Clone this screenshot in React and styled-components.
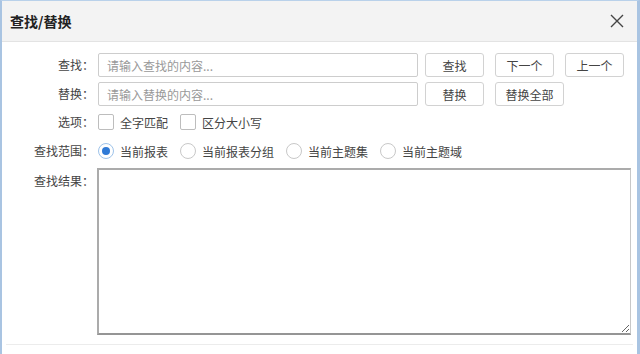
import styled, { createGlobalStyle } from 'styled-components';

const GlobalStyle = createGlobalStyle`
  html, body {
    margin: 0;
    padding: 0;
    background: #fff;
  }
  body {
    font-family: "Noto Sans CJK SC", "Noto Sans", sans-serif;
    font-size: 12px;
    color: #333;
  }
`;

function App() {
  const scopes = ['当前报表', '当前报表分组', '当前主题集', '当前主题域'];

  return (
    <>
      <GlobalStyle />
      <Dialog>
        <Header>
          <Title>查找/替换</Title>
          <CloseButton aria-label="close">
            <svg width="14" height="14" viewBox="0 0 14 14">
              <path d="M1 1 L13 13 M13 1 L1 13" stroke="#444" strokeWidth="1.4" fill="none" />
            </svg>
          </CloseButton>
        </Header>

        <Body>
          <Row>
            <Label>查找：</Label>
            <TextInput placeholder="请输入查找的内容..." />
            <ButtonGroup>
              <Button>查找</Button>
              <Button>下一个</Button>
              <Button>上一个</Button>
            </ButtonGroup>
          </Row>

          <Row $top={5}>
            <Label>替换：</Label>
            <TextInput placeholder="请输入替换的内容..." />
            <ButtonGroup>
              <Button>替换</Button>
              <Button $wide>替换全部</Button>
            </ButtonGroup>
          </Row>

          <Row $top={4}>
            <Label>选项：</Label>
            <Choice>
              <Box />
              <span>全字匹配</span>
            </Choice>
            <Choice>
              <Box />
              <span>区分大小写</span>
            </Choice>
          </Row>

          <Row $top={5}>
            <Label>查找范围：</Label>
            {scopes.map((s, i) => (
              <Choice key={s}>
                <Radio $checked={i === 0} />
                <span>{s}</span>
              </Choice>
            ))}
          </Row>

          <ResultRow>
            <Label $top>查找结果：</Label>
            <Results />
          </ResultRow>
        </Body>

        <Footer />
      </Dialog>
    </>
  );
}

export default App;

const Dialog = styled.div`
  width: 640px;
  height: 354px;
  box-sizing: border-box;
  border-top: 1px solid #b9d1ea;
  border-left: 2px solid #a9c4e2;
  border-right: 3px solid #a9c4e2;
  background: #fff;
  display: flex;
  flex-direction: column;
  overflow: hidden;
`;

const Header = styled.div`
  height: 40px;
  flex-shrink: 0;
  background: #f3f3f3;
  border-bottom: 1px solid #e3e3e3;
  display: flex;
  align-items: center;
  justify-content: space-between;
  padding: 0 12px 0 8px;
`;

const Title = styled.div`
  font-size: 14px;
  font-weight: bold;
  color: #222;
`;

const CloseButton = styled.div`
  width: 16px;
  height: 16px;
  display: flex;
  align-items: center;
  justify-content: center;
`;

const Body = styled.div`
  flex: 1;
  padding-top: 11px;
  padding-right: 6px;
`;

const Row = styled.div`
  display: flex;
  align-items: center;
  height: 24px;
  margin-top: ${(p) => p.$top || 0}px;
`;

const ResultRow = styled.div`
  display: flex;
  align-items: flex-start;
  margin-top: 5px;
`;

const Label = styled.div`
  width: 92px;
  flex-shrink: 0;
  text-align: right;
  padding-right: 4px;
  color: #444;
  line-height: 24px;
  white-space: nowrap;
  margin-top: ${(p) => (p.$top ? '1px' : '0')};
`;

const TextInput = styled.input`
  width: 320px;
  height: 24px;
  box-sizing: border-box;
  border: 1px solid #cdcdcd;
  border-radius: 2px;
  padding: 0 8px;
  font-family: inherit;
  font-size: 12px;
  color: #333;
  outline: none;

  &::placeholder {
    color: #999;
  }
`;

const ButtonGroup = styled.div`
  display: flex;
  gap: 11px;
  margin-left: 7px;
`;

const Button = styled.button`
  width: ${(p) => (p.$wide ? '69px' : '59px')};
  height: 24px;
  box-sizing: border-box;
  border: 1px solid #d2d2d2;
  border-radius: 3px;
  background: #fff;
  font-family: inherit;
  font-size: 12px;
  color: #444;
  padding: 0;
`;

const Choice = styled.label`
  display: flex;
  align-items: center;
  gap: 6px;
  margin-right: 12px;
  color: #444;
`;

const Box = styled.span`
  width: 16px;
  height: 16px;
  box-sizing: border-box;
  border: 1px solid #bdbdbd;
  border-radius: 2px;
  background: #fff;
`;

const Radio = styled.span`
  width: 16px;
  height: 16px;
  box-sizing: border-box;
  border-radius: 50%;
  border: 1px solid ${(p) => (p.$checked ? '#9ec3ea' : '#c8c8c8')};
  background: #fff;
  display: flex;
  align-items: center;
  justify-content: center;

  &::after {
    content: '';
    width: 8px;
    height: 8px;
    border-radius: 50%;
    background: ${(p) => (p.$checked ? '#2f7ad6' : 'transparent')};
  }
`;

const Results = styled.textarea`
  width: 534px;
  height: 167px;
  box-sizing: border-box;
  border-top: 2px solid #ababab;
  border-left: 2px solid #ababab;
  border-right: 1px solid #c8c8c8;
  border-bottom: 2px solid #959595;
  margin-left: -1px;
  background: #fff;
  outline: none;
  font-family: inherit;
  font-size: 12px;
`;

const Footer = styled.div`
  height: 9px;
  flex-shrink: 0;
  margin: 0 4px;
  border-top: 1px solid #ececec;
`;
